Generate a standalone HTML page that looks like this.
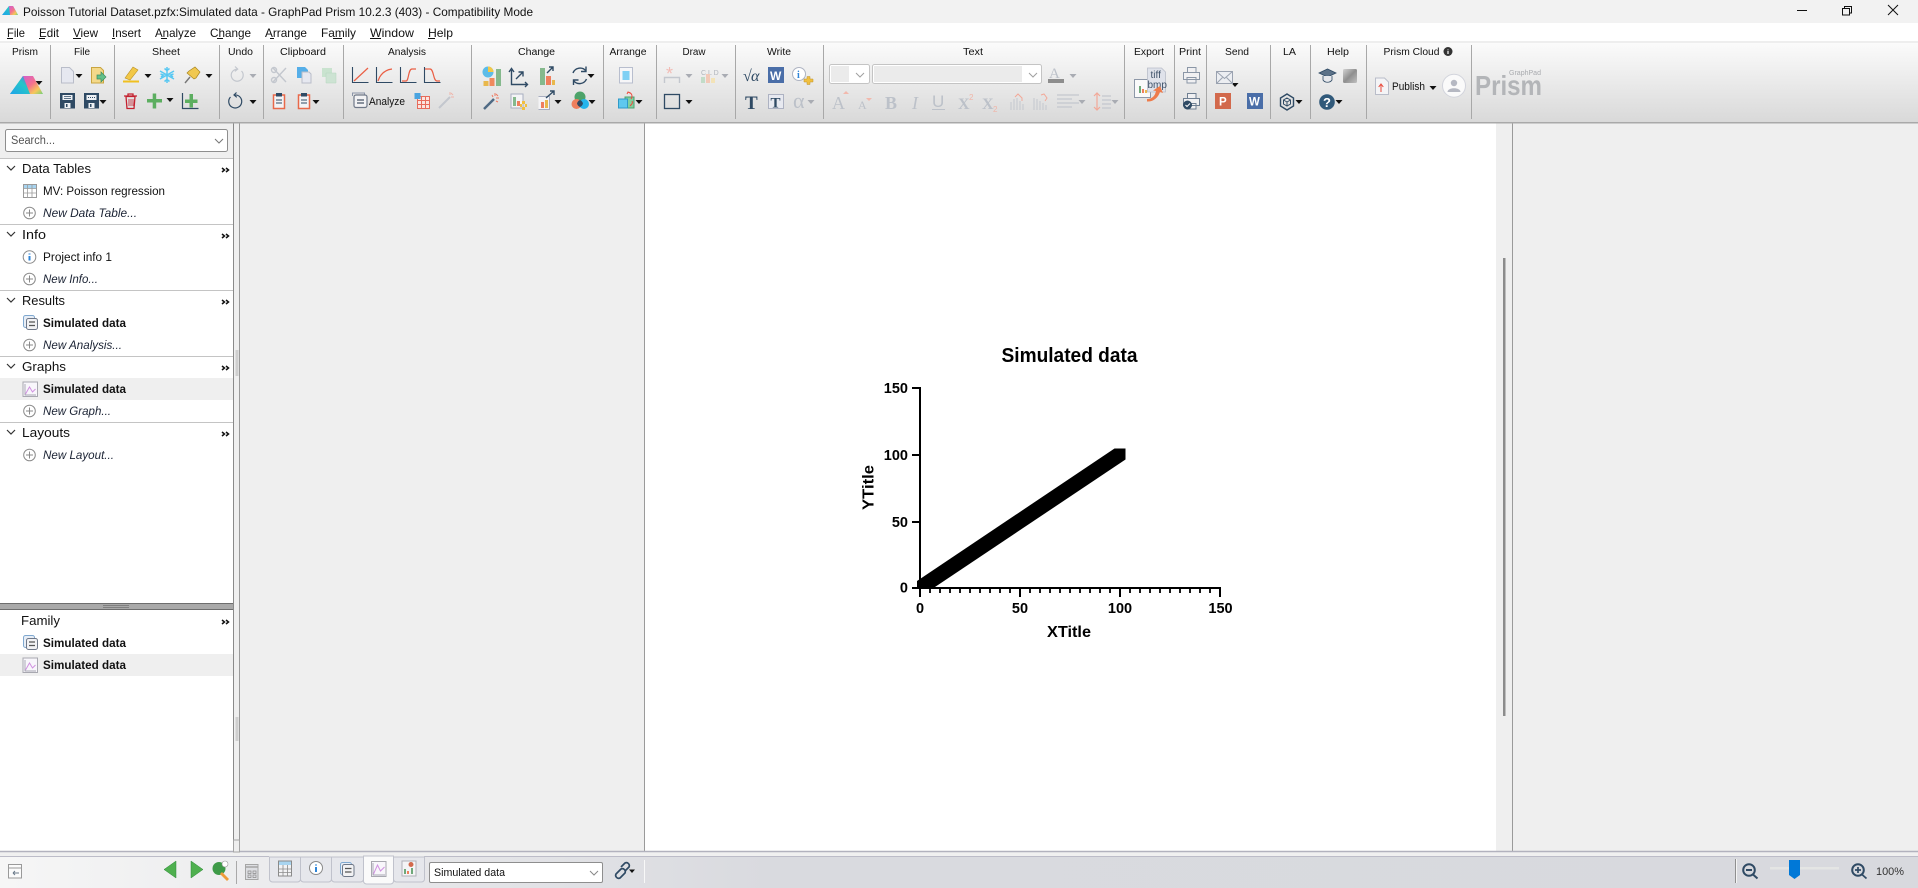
<!DOCTYPE html>
<html lang="en"><head><meta charset="utf-8"><title>Poisson Tutorial Dataset.pzfx:Simulated data - GraphPad Prism 10.2.3 (403) - Compatibility Mode</title>
<style>
html,body{margin:0;padding:0;width:1918px;height:888px;overflow:hidden;background:#efefef}
svg{display:block;position:absolute;left:0;top:0}
text{font-family:"Liberation Sans",sans-serif;fill:#111;dominant-baseline:auto}
.m{font-size:12px}.l{font-size:10px;text-anchor:middle}.h{font-size:13px}.r{font-size:11.5px}
.i{font-size:11.5px;font-style:italic;fill:#1a2233}.b{font-size:11.5px;font-weight:700}
.g{font-family:"Liberation Sans",sans-serif;font-weight:700;font-size:14.5px;fill:#000}
.a{fill:#111}.d{fill:#a9acb3}
.s{fill:none;stroke:#2f4a64;stroke-width:1.4}.k{fill:none;stroke:#c3c7ce;stroke-width:1.4}
.sep{stroke:#a8a8a8;stroke-width:1}
.u{stroke:#111;stroke-width:.9}
</style></head><body>
<svg width="1918" height="888" viewBox="0 0 1918 888" xmlns="http://www.w3.org/2000/svg">
<defs>
<linearGradient id="rib" x1="0" y1="0" x2="0" y2="1"><stop offset="0" stop-color="#fbfbfb"/><stop offset="1" stop-color="#d9d9d9"/></linearGradient>
<linearGradient id="bar" x1="0" y1="0" x2="1" y2="0"><stop offset="0" stop-color="#f6f6f6"/><stop offset=".4" stop-color="#d9dadf"/><stop offset="1" stop-color="#d8d9de"/></linearGradient>
<linearGradient id="pl" x1="0" y1="1" x2="1" y2="0"><stop offset="0" stop-color="#1ea3ea"/><stop offset=".6" stop-color="#26c6c8"/><stop offset="1" stop-color="#7a5fd8"/></linearGradient>
<linearGradient id="pr" x1="0" y1="0" x2="1" y2="1"><stop offset="0" stop-color="#d05fd0"/><stop offset=".45" stop-color="#f4708f"/><stop offset=".75" stop-color="#f6c85a"/><stop offset="1" stop-color="#6fd07a"/></linearGradient>
<linearGradient id="gs" x1="0" y1="0" x2="1" y2="1"><stop offset="0" stop-color="#d4d4d4"/><stop offset=".5" stop-color="#8f8f8f"/><stop offset="1" stop-color="#c0c0c0"/></linearGradient>
</defs>

<!-- title bar -->
<rect width="1918" height="23" fill="#f2f2f2"/>
<polygon points="2,15 9,6 13,6 18,15" fill="url(#pl)"/><polygon points="9,6 13,6 18,15 10,15" fill="url(#pr)"/>
<text x="23" y="16" font-size="12" textLength="510" lengthAdjust="spacingAndGlyphs">Poisson Tutorial Dataset.pzfx:Simulated data - GraphPad Prism 10.2.3 (403) - Compatibility Mode</text>
<path d="M1797 10.5h10" stroke="#111" fill="none"/>
<path d="M1842.5 8.5h7v6.5h-7zM1844.5 8v-1.5h7v6.5h-1.5" stroke="#111" fill="none"/>
<path d="M1888 5l10 10M1898 5l-10 10" stroke="#111" fill="none"/>

<!-- menu -->
<rect y="23" width="1918" height="18" fill="#fff"/>
<g class="m">
<text class="m" x="7" y="37" textLength="18" lengthAdjust="spacingAndGlyphs">File</text>
<text class="m" x="39" y="37" textLength="20" lengthAdjust="spacingAndGlyphs">Edit</text>
<text class="m" x="73" y="37" textLength="25" lengthAdjust="spacingAndGlyphs">View</text>
<text class="m" x="112" y="37" textLength="29" lengthAdjust="spacingAndGlyphs">Insert</text>
<text class="m" x="155" y="37" textLength="41" lengthAdjust="spacingAndGlyphs">Analyze</text>
<text class="m" x="210" y="37" textLength="41" lengthAdjust="spacingAndGlyphs">Change</text>
<text class="m" x="265" y="37" textLength="42" lengthAdjust="spacingAndGlyphs">Arrange</text>
<text class="m" x="321" y="37" textLength="35" lengthAdjust="spacingAndGlyphs">Family</text>
<text class="m" x="370" y="37" textLength="44" lengthAdjust="spacingAndGlyphs">Window</text>
<text class="m" x="428" y="37" textLength="25" lengthAdjust="spacingAndGlyphs">Help</text>
</g>
<path class="u" d="M7 38.500h6M39 38.500h6M73 38.500h8M112 38.500h3M161 38.500h6M217 38.500h6M270 38.500h4M333 38.500h9M370 38.500h11M428 38.500h7"/>

<!-- ribbon -->
<rect y="41" width="1918" height="2" fill="#eeeeee"/>
<rect y="43" width="1918" height="79" fill="url(#rib)"/>
<rect y="122" width="1918" height="1.5" fill="#a9a9a9"/>
<path class="sep" d="M50.500 45V119M114.500 45V119M219.500 45V119M263.500 45V119M343.500 45V119M471.500 45V119M603.500 45V119M656.500 45V119M735.500 45V119M823.500 45V119M1124.500 45V119M1174.500 45V119M1206.500 45V119M1270.500 45V119M1310.500 45V119M1366.500 45V119M1471.500 45V119"/>
<text class="l" x="25" y="55" textLength="26" lengthAdjust="spacingAndGlyphs">Prism</text>
<text class="l" x="82" y="55">File</text>
<text class="l" x="166" y="55" textLength="28" lengthAdjust="spacingAndGlyphs">Sheet</text>
<text class="l" x="240.500" y="55" textLength="25" lengthAdjust="spacingAndGlyphs">Undo</text>
<text class="l" x="303" y="55" textLength="46" lengthAdjust="spacingAndGlyphs">Clipboard</text>
<text class="l" x="407" y="55" textLength="38" lengthAdjust="spacingAndGlyphs">Analysis</text>
<text class="l" x="536.500" y="55" textLength="37" lengthAdjust="spacingAndGlyphs">Change</text>
<text class="l" x="628" y="55" textLength="37" lengthAdjust="spacingAndGlyphs">Arrange</text>
<text class="l" x="694" y="55" textLength="23" lengthAdjust="spacingAndGlyphs">Draw</text>
<text class="l" x="779" y="55" textLength="24" lengthAdjust="spacingAndGlyphs">Write</text>
<text class="l" x="973" y="55" textLength="20" lengthAdjust="spacingAndGlyphs">Text</text>
<text class="l" x="1149" y="55" textLength="30" lengthAdjust="spacingAndGlyphs">Export</text>
<text class="l" x="1190" y="55" textLength="22" lengthAdjust="spacingAndGlyphs">Print</text>
<text class="l" x="1237" y="55" textLength="24" lengthAdjust="spacingAndGlyphs">Send</text>
<text class="l" x="1289.500" y="55" textLength="13" lengthAdjust="spacingAndGlyphs">LA</text>
<text class="l" x="1338" y="55" textLength="22" lengthAdjust="spacingAndGlyphs">Help</text>
<text class="l" x="1411.500" y="55" textLength="56" lengthAdjust="spacingAndGlyphs">Prism Cloud</text>
<circle cx="1448" cy="51.500" r="4.500" fill="#333"/><path d="M1448 49.500v.8M1448 51v3" stroke="#fff" stroke-width="1.2"/>

<!-- dropdown arrows -->
<path class="a" d="M35.500 81h7l-3.500 4zM75.500 74h7l-3.500 4zM99.500 100h7l-3.500 4zM144.500 74h7l-3.500 4zM205.500 74h7l-3.500 4zM166.500 98h7l-3.500 4zM249.500 100h7l-3.500 4zM312.500 100h7l-3.500 4zM587.500 74h7l-3.500 4zM554.500 100h7l-3.500 4zM588.500 100h7l-3.500 4zM635.500 100h7l-3.500 4zM685.500 100h7l-3.500 4zM1231.500 83h7l-3.500 4zM1295.500 100h7l-3.500 4zM1335.500 100h7l-3.500 4zM1429.500 86h7l-3.500 4z"/>
<path class="d" d="M249.500 74h7l-3.500 4zM685.500 74h7l-3.500 4zM721.500 74h7l-3.500 4zM807.500 100h7l-3.500 4zM1069.500 74h7l-3.500 4zM1078.500 100h7l-3.500 4zM1111.500 100h7l-3.500 4z"/>

<!-- Prism -->
<polygon points="10,94 23,76 33,76 26,94" fill="url(#pl)"/><polygon points="23,76 33,76 43,94 22,94" fill="url(#pr)"/><polygon points="10,94 23,76 30,94" fill="url(#pl)"/>

<!-- File -->
<path d="M61.500 67.500h8l4 4v11.500h-12z" fill="#e6e8f0" stroke="#b9bdc9"/>
<path d="M91.500 67.500h9l3 3v12.500h-12z" fill="#f4d98a" stroke="#c9a540"/><path d="M97 75h4v-3l5 5-5 5v-3h-4z" fill="#62c08a" stroke="#3c8a60" stroke-width=".7"/>
<path d="M60 93h15v15.500h-15z" fill="#2f4a64"/><path d="M62.500 95h10v5h-10z" fill="#eef1f5"/><path d="M64 96.500h7M64 98.500h7" stroke="#2f4a64" stroke-width=".7"/><path d="M64.500 103h6v5h-6z" fill="#eef1f5"/><path d="M66 104h1.500v3H66z" fill="#2f4a64"/>
<path d="M84 93h15v15.500h-15z" fill="#2f4a64"/><path d="M86.500 95h10v5h-10z" fill="#eef1f5"/><path d="M88 97.500h7" stroke="#2f4a64" stroke-width=".9" stroke-dasharray="1 1"/><path d="M88.500 103h6v5h-6z" fill="#eef1f5"/><path d="M90 104h1.500v3H90z" fill="#2f4a64"/>

<!-- Sheet -->
<path d="M125 78l8-11 5 3-8 10z" fill="#f2c848" stroke="#b98f20" stroke-width=".6"/><path d="M123 80.500h16v2h-16z" fill="#f0c020"/>
<g stroke="#58c8f2" stroke-width="1.5" fill="none"><path d="M167 67v16M160 71l14 8M174 71l-14 8M164.500 68.500l2.500 2 2.500-2M164.500 81.500l2.500-2 2.500 2M160.500 74l3 1-2.500 2M173.500 74l-3 1 2.500 2"/></g>
<path d="M185 83l5-6" stroke="#777" stroke-width="1.4"/><path d="M189 71l6-4 5 5-4 6-2 1-7-6z" fill="#f0c850" stroke="#a88520" stroke-width=".7"/>
<path d="M124 96h13M128 96v-2h5v2M126 96.500l1 12h7l1-12z" fill="none" stroke="#c4202e" stroke-width="1.3"/><path d="M129 99v7M131 99v7M133 99v7" stroke="#c4202e" stroke-width=".8"/>
<path d="M147 99h15v3.500h-15zM152.700 93.500h3.500v15h-3.500z" fill="#5cae60"/>
<path d="M182.500 93v15.500h16" stroke="#2f4a64" fill="none" stroke-width="1.2"/><path d="M185 99.500h12.500v3.500h-12.500zM189.500 94h3.500v13.500h-3.500z" fill="#5cae60"/>

<!-- Undo -->
<path d="M241.500 71a6 6 0 1 1-4-1.800M235 66.500l2.700 2.600-2.900 2.300" class="k" style="stroke-width:1.200"/>
<path d="M230.500 97a6.500 6.500 0 1 0 4-2M236.500 92.500l-2.500 2.500 2.800 2.300" class="s" style="stroke-width:1.200"/>

<!-- Clipboard -->
<g class="k"><path d="M273 82l13-14M286 82l-13-14"/><circle cx="274" cy="80" r="2.500"/><circle cx="274" cy="70" r="2.500"/></g>
<path d="M297 67h8l3 3v8h-11z" fill="#55aee8"/><path d="M302 72h7l2 2v9h-9z" fill="#e6e8f0" stroke="#b9bdc9"/>
<path d="M322 68h10v9h-10z" fill="#c9e3cf"/><path d="M326 73h10v10h-10z" fill="#cde3d3" stroke="#b5d6be" stroke-width=".5"/>
<path d="M273.500 95h11v13.500h-11z" fill="#f2f3f5" stroke="#e8694a" stroke-width="1.5"/><path d="M276 93h6v3.500h-6z" fill="#2f4a64"/><path d="M276 100h6M276 103h6" stroke="#2f4a64"/>
<path d="M298.500 95h11v13.500h-11z" fill="#f2f3f5" stroke="#e8694a" stroke-width="1.5"/><path d="M301 93h6v3.500h-6z" fill="#2f4a64"/><path d="M301 100h6M301 103h6" stroke="#2f4a64"/>

<!-- Analysis -->
<g fill="none"><path d="M352.500 67v15.500h16M376.500 67v15.500h16M400.500 67v15.500h16M424.500 67v15.500h16" stroke="#2f4a64" stroke-width="1.1"/>
<path d="M354 81l14-13" stroke="#ea5f45" stroke-width="1.2"/><path d="M378 81c2-6 6-11 14-12" stroke="#ea5f45" stroke-width="1.2"/><path d="M402 81h4c3 0 2-12 6-12h4" stroke="#ea5f45" stroke-width="1.2"/><path d="M425 69h5c4 0 3 12 7 12h3" stroke="#ea5f45" stroke-width="1.2"/></g>
<path d="M352.500 96v-3h12v2" fill="none" stroke="#8a94a8"/><rect x="354" y="95" width="13" height="12.500" rx="2" fill="#f2f2f4" stroke="#6f7888" stroke-width="1.2"/><path d="M357 100h7M357 103h7" stroke="#4a5568" stroke-width="1.2"/>
<text x="369" y="105" font-size="11" textLength="36" lengthAdjust="spacingAndGlyphs">Analyze</text>
<path d="M417.500 96.500h12v12h-12z" fill="#fbe5e0" stroke="#e86c5c"/><path d="M421.500 96.500v12M425.500 96.500v12M417.500 100.500h12M417.500 104.500h12" stroke="#e86c5c"/><rect x="414.500" y="93" width="6" height="6" fill="#4aa4e0"/>
<path d="M439 108l11-11" stroke="#c3c7ce" stroke-width="2"/><path d="M450 92v3M454 97h-3M451 93l2 2" stroke="#efb5aa"/>

<!-- Change -->
<path d="M496 69h5v17h-5z" fill="#85b98d"/><path d="M489.500 78h5v8h-5z" fill="#ef8a5e"/><path d="M483.500 81h5v5h-5z" fill="#e9b84c"/><circle cx="488" cy="72" r="5.500" fill="#5cbce8"/><path d="M488 72v-5.500a5.500 5.500 0 0 1 5.500 5.500z" fill="#f2c848"/>
<path d="M511.500 70v14.500h15M509 72l2.500-3.500 2.500 3.500M525 82l2.500 2.500-2.500 2.500M516 79l7-7M523 76.500v-4.500h-4.500" class="s"/>
<path d="M540 68h5v17h-5z" fill="#85b98d"/><path d="M546 76h5v9h-5z" fill="#ef7f5e"/><path d="M552 80h3v5h-3z" fill="#e9b84c"/><path d="M547 73l6-6M553 71v-4h-4" class="s"/>
<path d="M573 73a7.500 7.500 0 0 1 13-2M586.500 79a7.500 7.500 0 0 1-13 1.500M586 66.500v5h-5M573.500 85v-5h5" class="s"/>
<path d="M484 109l10-10" stroke="#4f6a84" stroke-width="2.500"/><path d="M495 93v3M499 98h-3M496 94l2 2M492 95l1 2M498 102l-2-1" stroke="#ee7b63"/>
<path d="M511 94h12v14h-12z" fill="#f4f4f6" stroke="#a8aec0"/><path d="M513 97h3v9h-3z" fill="#85b98d"/><path d="M517 101h3v5h-3z" fill="#ef7f5e"/><path d="M520 107h7v-3h-7zM522 101h3v9h-3z" fill="#f2c040"/>
<path d="M538.500 96.500h11v13h-11" fill="#f4f4f6" stroke="#a8aec0"/><path d="M541 102h3v6h-3z" fill="#ef7f5e"/><path d="M545 100h3v8h-3z" fill="#e9b84c"/><path d="M546 98l8-7M554 95v-4h-4" class="s"/>
<circle cx="580" cy="97" r="5.500" fill="#4da36a"/><circle cx="576.500" cy="104" r="5" fill="#ef7f5e"/><circle cx="584" cy="104" r="5" fill="#25b4ec"/><path d="M580 100a5 5 0 0 0-3 3.500 5 5 0 0 0 3 3.500 5 5 0 0 0 3-3.500 5 5 0 0 0-3-3.500z" fill="#2f4a64"/>

<!-- Arrange -->
<path d="M619.500 67.500h13v15.500h-13z" fill="#f6f6f8" stroke="#b8bece"/><path d="M622.500 71h7v9h-7z" fill="#7fd0f4"/>
<path d="M625 97h9v11h-9z" fill="#7fd0a0" stroke="#4ba070"/><path d="M618.500 99h9v9h-9z" fill="#5fc8ee" stroke="#2f9ac8"/><path d="M628 92c4 1 5 4 3 7M627 94l1-2 2 1M630 106c2-2 3-3 2-5" stroke="#ee4a3c" fill="none"/>

<!-- Draw -->
<text x="666" y="80" font-size="18" style="fill:#f2bcb5">*</text><path d="M664.500 83v-5.500h15v5.500" class="k"/>
<text x="701" y="75" font-size="7" style="fill:#b0b4bc">C L D</text><path d="M701 77h4v6h-4z" fill="#c2dcc8"/><path d="M706 74h4v9h-4z" fill="#f2c9b8"/><path d="M711 78h4v5h-4z" fill="#f3e3b8"/>
<rect x="664.500" y="94.500" width="15" height="14" fill="none" stroke="#2f4a64" stroke-width="1.3"/>

<!-- Write -->
<text x="743" y="81" font-size="16" style="fill:#2f4a64;font-family:'Liberation Serif',serif">√</text><text x="751" y="81" font-size="16" style="fill:#2f4a64;font-family:'Liberation Serif',serif;font-style:italic">α</text>
<rect x="768" y="67" width="16" height="16" fill="#4a6ea8"/><text x="770" y="80" font-size="12" font-weight="700" style="fill:#fff">W</text>
<circle cx="799" cy="74" r="6.500" fill="#fff" stroke="#aeb4c2"/><text x="797" y="78" font-size="10" font-weight="700" style="fill:#2f85d8;font-family:'Liberation Serif',serif">i</text><path d="M804 79h3v-2.500h3V79h3v3h-3v2.500h-3V82h-3z" fill="#f0c040" stroke="#c0922a" stroke-width=".5"/>
<text x="745" y="109" font-size="19" font-weight="700" style="fill:#2f4a64;font-family:'Liberation Serif',serif">T</text>
<rect x="768.500" y="94.500" width="15" height="14" fill="#e7e9f0" stroke="#adb2c2"/><text x="770.500" y="107.500" font-size="15" font-weight="700" style="fill:#2f4a64;font-family:'Liberation Serif',serif">T</text>
<text x="793" y="108" font-size="22" style="fill:#bcc1c9;font-family:'Liberation Serif',serif">α</text>

<!-- Text -->
<rect x="829.500" y="64.500" width="40" height="19" rx="2" fill="#fff" stroke="#c4c4c4"/><rect x="831" y="66" width="18" height="16" fill="#ebebeb"/><path d="M856 73l4 4 4-4" fill="none" stroke="#a0a0a0"/>
<rect x="872.500" y="64.500" width="169" height="19" rx="2" fill="#fff" stroke="#c4c4c4"/><rect x="874" y="66" width="148" height="16" fill="#ebebeb"/><path d="M1029 73l4 4 4-4" fill="none" stroke="#a0a0a0"/>
<text x="1049" y="78" font-size="15" style="fill:#bcc1c9;font-family:'Liberation Serif',serif">A</text><rect x="1048" y="79" width="16" height="4" fill="#8d8d8d"/>
<text x="832" y="109" font-size="18" style="fill:#bcc1c9;font-family:'Liberation Serif',serif">A</text><path d="M843 94l3-3 3 3z" fill="#f2b8ac"/>
<text x="858" y="109" font-size="12" style="fill:#bcc1c9;font-family:'Liberation Serif',serif">A</text><path d="M866 98h6l-3 3z" fill="#f2b8ac"/>
<text x="885" y="109" font-size="18" font-weight="700" style="fill:#bcc1c9;font-family:'Liberation Serif',serif">B</text>
<text x="912" y="109" font-size="18" font-style="italic" style="fill:#bcc1c9;font-family:'Liberation Serif',serif">I</text>
<text x="932" y="107" font-size="17" style="fill:#bcc1c9;font-family:'Liberation Sans',sans-serif">U</text><path d="M932 109.500h13" stroke="#bcc1c9"/>
<text x="958" y="109" font-size="16" font-weight="700" style="fill:#bcc1c9;font-family:'Liberation Serif',serif">X</text><text x="969" y="100" font-size="8" style="fill:#f0b5a8">2</text>
<text x="982" y="109" font-size="16" font-weight="700" style="fill:#bcc1c9;font-family:'Liberation Serif',serif">X</text><text x="993" y="112" font-size="8" style="fill:#f0b5a8">2</text>
<path d="M1011 110v-8M1014 110v-11M1017 110v-12M1020 110v-9M1023 110v-6M1034 110v-12M1037 110v-11M1040 110v-9M1043 110v-7M1046 110v-5" class="k" style="stroke-width:1"/><path d="M1015 97l3-3 4 4v3M1041 95l3-1 3 4-2 3" fill="none" stroke="#f2a898"/>
<path d="M1057 95h22M1057 99h15M1057 103h22M1057 107h15" class="k" style="stroke-width:1.200"/>
<path d="M1097 93v17M1094 96l3-3 3 3M1094 107l3 3 3-3" fill="none" stroke="#f2a898" stroke-width="1.200"/><path d="M1102 96h9M1102 100h9M1102 104h9M1102 108h9" class="k" style="stroke-width:1.200"/>

<!-- Export -->
<rect x="1134.500" y="79.500" width="16" height="18" fill="#fafafa" stroke="#8e98a8"/><path d="M1139 93v-7h2v7z" fill="#6fa97a"/><path d="M1142 93v-4h2v4z" fill="#ef7f5e"/><path d="M1145 93v-3h2v3z" fill="#e9b84c"/>
<path d="M1147.500 68h14l4 4v20h-18z" fill="#dfe2ea" stroke="#b9bdc9" stroke-width=".8"/>
<text x="1150.500" y="78" font-size="10" style="fill:#3f5269">tiff</text><text x="1147.500" y="88" font-size="10" style="fill:#3f5269">bmp</text>
<path d="M1147 99c5 0 8-3 9-8l-3-.5 7-4.500 3 7-3-1c-2 6-7 10-13 9.500z" fill="#ee7b4a"/>

<!-- Print -->
<path d="M1187.500 67.500h8.500v5h-8.500zM1183.500 72.500h16v7h-16zM1187 77.500h9v5.500h-9z" fill="#f0f0f2" stroke="#8a96a6"/>
<path d="M1187.500 93.500h8.500v5h-8.500zM1183.500 98.500h16v7h-16zM1187 103.500h9v5.500h-9z" fill="#f0f0f2" stroke="#6f7f92"/>
<circle cx="1187.500" cy="105" r="4.500" fill="#2f4a64"/><path d="M1185.500 105l1.500 1.500 3-3" stroke="#fff" fill="none"/>

<!-- Send -->
<rect x="1216.500" y="71.500" width="16" height="12" fill="#eceef2" stroke="#9aa2b0"/><path d="M1216.500 71.500l8 7 8-7M1216.500 83.500l6-6M1232.500 83.500l-6-6" stroke="#9aa2b0" fill="none"/>
<rect x="1215" y="93" width="16" height="16" fill="#d2694c"/><text x="1219" y="105.500" font-size="11.500" font-weight="700" style="fill:#fff">P</text>
<rect x="1247" y="93" width="16" height="16" fill="#4a6ea8"/><text x="1249" y="105.500" font-size="11.500" font-weight="700" style="fill:#fff">W</text>

<!-- LA -->
<path d="M1287 94l6.500 4v8l-6.500 4-6.500-4v-8z" fill="none" stroke="#2f4a64" stroke-width="1.400"/><path d="M1287 98l3.500 2v4l-3.500 2-3.500-2v-4zM1287 102v4M1287 102l3.500-2M1287 102l-3.500-2" fill="none" stroke="#2f4a64"/>

<!-- Help -->
<path d="M1319 73l8.500-4 8.500 4-8.500 4z" fill="#5c7288" stroke="#2f4a64" stroke-width=".8"/><path d="M1323 76v4c2 3 7 3 9 0v-4" fill="#e6e8ec" stroke="#2f4a64" stroke-width=".8"/>
<rect x="1343" y="69" width="14" height="14" rx="1.500" fill="url(#gs)"/>
<circle cx="1327" cy="102" r="7.800" fill="#30597a"/><text x="1323" y="107" font-size="13" font-weight="700" style="fill:#fff">?</text>

<!-- Publish -->
<path d="M1375.500 78h9l4 4v12.500h-13z" fill="#f4f4f6" stroke="#b9bdc9"/><path d="M1381 92v-7M1378.700 87l2.300-3 2.300 3" stroke="#e84a3c" fill="none"/>
<text x="1392" y="90" font-size="11" textLength="33" lengthAdjust="spacingAndGlyphs">Publish</text>
<circle cx="1454" cy="85.700" r="11.500" fill="#fafafa" stroke="#d2d4dc"/><circle cx="1454" cy="83" r="3.200" fill="#b5b8c2"/><path d="M1447.500 92c0-5 13-5 13 0z" fill="#b5b8c2"/>
<text x="1475" y="95" font-size="28" font-weight="700" textLength="67" lengthAdjust="spacingAndGlyphs" style="fill:#b3b5b8">Prism</text>
<text x="1509" y="75" font-size="7" textLength="32" lengthAdjust="spacingAndGlyphs" style="fill:#a8aaae">GraphPad</text>

<!-- workspace -->
<rect y="123.500" width="1918" height="728" fill="#efefef"/>
<rect x="645" y="123.500" width="851" height="728" fill="#fff"/>
<path d="M239.500 123.500V852M644.500 123.500V852M1512.500 123.500V852" stroke="#9a9a9a"/>
<rect x="1503" y="258" width="2.500" height="458" fill="#8c8c8c"/>

<!-- left panel -->
<rect y="158" width="233" height="445" fill="#fff"/>
<rect y="610" width="233" height="241" fill="#fff"/>
<path d="M233.500 123.500V852" stroke="#8a8a8a"/>
<rect x="235.500" y="350" width="3" height="26" fill="#cfcfcf"/>
<rect x="235.500" y="717" width="3" height="24" fill="#cfcfcf"/>
<rect x="5.500" y="129.500" width="222" height="22" rx="2" fill="#fff" stroke="#8e8e8e"/>
<text x="11" y="144" font-size="11.500" textLength="44" lengthAdjust="spacingAndGlyphs" style="fill:#555">Search...</text>
<path d="M215 139l4 4 4-4" fill="none" stroke="#777"/>
<path d="M0 158.500h233M0 224.500h233M0 290.500h233M0 356.500h233M0 422.500h233" stroke="#c4c4c4"/>
<rect y="378" width="233" height="22" fill="#efefef"/>
<rect y="654" width="233" height="22" fill="#efefef"/>
<path d="M7 166l4 4 4-4M7 232l4 4 4-4M7 298l4 4 4-4M7 364l4 4 4-4M7 430l4 4 4-4" fill="none" stroke="#333" stroke-width="1.200"/>
<path d="M222 168l2.500 2-2.500 2M226 168l2.500 2-2.500 2M222 234l2.500 2-2.500 2M226 234l2.500 2-2.500 2M222 300l2.500 2-2.500 2M226 300l2.500 2-2.500 2M222 366l2.500 2-2.500 2M226 366l2.500 2-2.500 2M222 432l2.500 2-2.500 2M226 432l2.500 2-2.500 2M222 620l2.500 2-2.500 2M226 620l2.500 2-2.500 2" fill="none" stroke="#111" stroke-width="1.500"/>
<text class="h" x="22" y="173" textLength="69" lengthAdjust="spacingAndGlyphs">Data Tables</text>
<text class="h" x="22" y="239" textLength="24" lengthAdjust="spacingAndGlyphs">Info</text>
<text class="h" x="22" y="305" textLength="43" lengthAdjust="spacingAndGlyphs">Results</text>
<text class="h" x="22" y="371" textLength="44" lengthAdjust="spacingAndGlyphs">Graphs</text>
<text class="h" x="22" y="437" textLength="48" lengthAdjust="spacingAndGlyphs">Layouts</text>
<text class="h" x="21" y="625" textLength="39" lengthAdjust="spacingAndGlyphs">Family</text>
<text class="r" x="43" y="195" textLength="122" lengthAdjust="spacingAndGlyphs">MV: Poisson regression</text>
<text class="i" x="43" y="217" textLength="94" lengthAdjust="spacingAndGlyphs">New Data Table...</text>
<text class="r" x="43" y="261" textLength="69" lengthAdjust="spacingAndGlyphs">Project info 1</text>
<text class="i" x="43" y="283" textLength="55" lengthAdjust="spacingAndGlyphs">New Info...</text>
<text class="b" x="43" y="327" textLength="83" lengthAdjust="spacingAndGlyphs">Simulated data</text>
<text class="i" x="43" y="349" textLength="79" lengthAdjust="spacingAndGlyphs">New Analysis...</text>
<text class="b" x="43" y="393" textLength="83" lengthAdjust="spacingAndGlyphs">Simulated data</text>
<text class="i" x="43" y="415" textLength="68" lengthAdjust="spacingAndGlyphs">New Graph...</text>
<text class="i" x="43" y="459" textLength="71" lengthAdjust="spacingAndGlyphs">New Layout...</text>
<text class="b" x="43" y="647" textLength="83" lengthAdjust="spacingAndGlyphs">Simulated data</text>
<text class="b" x="43" y="669" textLength="83" lengthAdjust="spacingAndGlyphs">Simulated data</text>
<!-- plus circles -->
<g fill="none" stroke="#8a8a8a"><circle cx="29.500" cy="213" r="5.800"/><circle cx="29.500" cy="279" r="5.800"/><circle cx="29.500" cy="345" r="5.800"/><circle cx="29.500" cy="411" r="5.800"/><circle cx="29.500" cy="455" r="5.800"/>
<path d="M26 213h7M29.500 209.500v7M26 279h7M29.500 275.500v7M26 345h7M29.500 341.500v7M26 411h7M29.500 407.500v7M26 455h7M29.500 451.500v7"/></g>
<!-- table icon -->
<rect x="23.500" y="184.500" width="13" height="13" fill="#fff" stroke="#9a9a9a"/><rect x="24" y="185" width="12" height="3.500" fill="#a8d4f0"/><path d="M27.500 185v12M32 185v12M24 188.500h12M24 193h12" stroke="#9a9a9a" stroke-width=".8"/>
<!-- info -->
<circle cx="29.500" cy="257" r="6.300" fill="#fff" stroke="#8a8a8a"/><path d="M29.500 253.500v1M29.500 256v4.500" stroke="#2f85d8" stroke-width="2"/>
<!-- results icons -->
<g fill="none"><rect x="23.500" y="315.500" width="11" height="12" rx="2" fill="#e8eef6" stroke="#7fa8d0"/><rect x="26.500" y="318.500" width="11" height="11" rx="2" fill="#f2f2f4" stroke="#6f7888"/><path d="M29 322h6M29 325.500h6" stroke="#555" stroke-width="1.200"/>
<rect x="23.500" y="635.500" width="11" height="12" rx="2" fill="#e8eef6" stroke="#7fa8d0"/><rect x="26.500" y="638.500" width="11" height="11" rx="2" fill="#f2f2f4" stroke="#6f7888"/><path d="M29 642h6M29 645.500h6" stroke="#555" stroke-width="1.200"/></g>
<!-- graph icons -->
<rect x="23" y="382" width="14.500" height="14.500" fill="#f8f6fb" stroke="#a8a8b0"/><path d="M25 384v11h11" stroke="#8a8a9a" fill="none" stroke-width=".7"/><path d="M25.500 394l4-7 3 5 3-3" stroke="#d090e0" fill="none"/>
<rect x="23" y="658" width="14.500" height="14.500" fill="#f8f6fb" stroke="#a8a8b0"/><path d="M25 660v11h11" stroke="#8a8a9a" fill="none" stroke-width=".7"/><path d="M25.500 670l4-7 3 5 3-3" stroke="#d090e0" fill="none"/>
<!-- family splitter -->
<rect y="603.500" width="233" height="6" fill="#a9a9a9"/><path d="M0 603.500h233M0 609.500h233" stroke="#6e6e6e"/><path d="M103 605.500h26M103 607.500h26" stroke="#808080"/>

<!-- bottom -->
<path d="M0 851.500h1918" stroke="#b2b2be" stroke-width="1.500"/>
<rect y="852.500" width="1918" height="4" fill="#f0f0f0"/>
<rect y="856.500" width="1918" height="32" fill="url(#bar)"/>
<path d="M0 856.500h269M424 856.500H1918" stroke="#bcbcc8"/>
<rect x="233.500" y="840" width="6" height="12" fill="#efefef" stroke="#a5a5a5"/>
<path d="M8.500 864.500h13v13.500h-13z" fill="#fbfbfb" stroke="#9a9a9a"/><path d="M8.500 868h13" stroke="#9a9a9a"/><path d="M13 873h6M13 873l2-2M13 873l2 2" stroke="#6a7a8a" fill="none"/>
<path d="M176 861v17l-12-8.500zM191 861v17l12-8.500z" fill="#4fb04f" stroke="#2f8a3a" stroke-width=".5"/>
<circle cx="219" cy="868.500" r="6.500" fill="#3e9a48"/><path d="M222 872l7 7-2 2-7-7z" fill="#ef9c3a"/><circle cx="225" cy="864" r="3" fill="#fff" stroke="#999" stroke-width=".6"/>
<path d="M236.500 861V884" stroke="#a9a9a9"/>
<rect x="245.500" y="864.500" width="12.500" height="15" fill="#dddee2" stroke="#a5a5a5"/><path d="M245.500 867h12.500" stroke="#a5a5a5" stroke-width="1.500"/><path d="M248 871h3v2.500h-3zM253 871h3v2.500h-3zM248 875h3v2.500h-3zM253 875h3v2.500h-3z" fill="none" stroke="#8a8a8a" stroke-width=".7"/>
<!-- tabs -->
<g stroke="#c0c2cc" fill="#e6e7ec"><path d="M269.500 857v22a3 3 0 0 0 3 3h25a3 3 0 0 0 3-3v-22z"/><path d="M300.500 857v22a3 3 0 0 0 3 3h25a3 3 0 0 0 3-3v-22z"/><path d="M331.500 857v22a3 3 0 0 0 3 3h26a3 3 0 0 0 3-3v-22z"/><path d="M393.500 857v22a3 3 0 0 0 3 3h25a3 3 0 0 0 3-3v-22z"/><path d="M363.500 856v25a3 3 0 0 0 3 3h24a3 3 0 0 0 3-3v-25z" fill="#fafafa"/></g>
<rect x="278.500" y="861" width="13" height="15" fill="#f2f2f4" stroke="#8a8a8a"/><rect x="279" y="861.500" width="12" height="3.500" fill="#a8d4f0"/><path d="M283 865v11M287.500 865v11M279 869h12M279 872.500h12" stroke="#8a8a8a" stroke-width=".8"/>
<circle cx="316" cy="868" r="6.500" fill="#fff" stroke="#8a8a8a"/><path d="M316 864.500v1M316 867v5" stroke="#2f85d8" stroke-width="2"/>
<rect x="340.500" y="862.500" width="11" height="12" rx="2" fill="#e8eef6" stroke="#7fa8d0"/><rect x="342.500" y="864.500" width="11.500" height="12" rx="2" fill="#f2f2f4" stroke="#6f7888"/><path d="M345 868.500h6.500M345 872h6.500" stroke="#555" stroke-width="1.200"/>
<rect x="371.500" y="861.500" width="14.500" height="15" fill="#f8f6fb" stroke="#a8a8b0"/><path d="M373 863v12h12" stroke="#8a8a9a" fill="none" stroke-width=".7"/><path d="M373.500 874l4-9 3 6 4-4" stroke="#d090e0" fill="none"/>
<rect x="402" y="861" width="14" height="15" fill="#f4f4f6" stroke="#b0b0b8"/><path d="M404 874v-5h2v5zM407 874v-3h2v3zM411 874v-6h2v6z" fill="#6fa97a"/><path d="M407 874v-3h2v3z" fill="#ef7f5e"/><circle cx="411" cy="864.500" r="2.500" fill="#d2694c"/>
<rect x="429.500" y="862.500" width="173" height="20" rx="1.500" fill="#fff" stroke="#8e8e8e"/>
<text x="434" y="876" font-size="11" textLength="71" lengthAdjust="spacingAndGlyphs">Simulated data</text>
<path d="M590 871l4 4 4-4" fill="none" stroke="#888"/>
<g fill="none" stroke="#2f4a64" stroke-width="1.700" transform="translate(0 -3)"><path d="M616 877l5-5a3 3 0 0 1 4 4l-5 5a3 3 0 0 1-4-4z"/><path d="M621 870l4-4a3 3 0 0 1 4 4l-4 4"/></g>
<path class="a" d="M629 869.500h6l-3 3.500z"/>
<path d="M644.500 860V883" stroke="#f8f8f8"/>
<!-- zoom -->
<path d="M1735.500 859V883" stroke="#8f8f8f"/><path d="M1736.500 859V883" stroke="#f4f4f4"/>
<g fill="none" stroke="#2f4a64" stroke-width="2"><circle cx="1749" cy="870" r="5.800"/><path d="M1753 874.500l4.500 4M1746 870h6"/><circle cx="1858" cy="870" r="5.800"/><path d="M1862 874.500l4.500 4M1855 870h6M1858 867v6" stroke-width="1.700"/></g>
<rect x="1770" y="867" width="69" height="2.500" fill="#e4e5e4"/>
<path d="M1789 860h11v15l-5.500 4-5.500-4z" fill="#0078d7"/>
<text x="1876" y="875" font-size="11" textLength="28" lengthAdjust="spacingAndGlyphs" style="fill:#333">100%</text>

<!-- graph -->
<polygon points="917,581 1114.500,448.500 1125.500,448.500 1125.500,459.500 932,589 917,589" fill="#000"/>
<path d="M920 387V589M912 388h8M912 455h8M912 522h8M912 588H1221M920 588v9M1020 588v9M1120 588v9M1220 588v9" stroke="#000" stroke-width="2" fill="none"/>
<path d="M930 588v5M940 588v5M950 588v5M960 588v5M970 588v5M980 588v5M990 588v5M1000 588v5M1010 588v5M1030 588v5M1040 588v5M1050 588v5M1060 588v5M1070 588v5M1080 588v5M1090 588v5M1100 588v5M1110 588v5M1130 588v5M1140 588v5M1150 588v5M1160 588v5M1170 588v5M1180 588v5M1190 588v5M1200 588v5M1210 588v5" stroke="#000" stroke-width="1.800" fill="none"/>
<text x="1001.500" y="362" font-size="20" font-weight="700" textLength="136" lengthAdjust="spacingAndGlyphs" style="fill:#000">Simulated data</text>
<g text-anchor="end"><text class="g" x="908" y="393">150</text><text class="g" x="908" y="460">100</text><text class="g" x="908" y="527">50</text><text class="g" x="908" y="592.500">0</text></g>
<g text-anchor="middle"><text class="g" x="920" y="613">0</text><text class="g" x="1020" y="613">50</text><text class="g" x="1120" y="613">100</text><text class="g" x="1220.500" y="613">150</text></g>
<text x="1047" y="637" font-size="16" font-weight="700" textLength="44" lengthAdjust="spacingAndGlyphs" style="fill:#000">XTitle</text>
<text transform="translate(873.500 510) rotate(-90)" font-size="16" font-weight="700" textLength="45" lengthAdjust="spacingAndGlyphs" style="fill:#000">YTitle</text>
</svg>
</body></html>
